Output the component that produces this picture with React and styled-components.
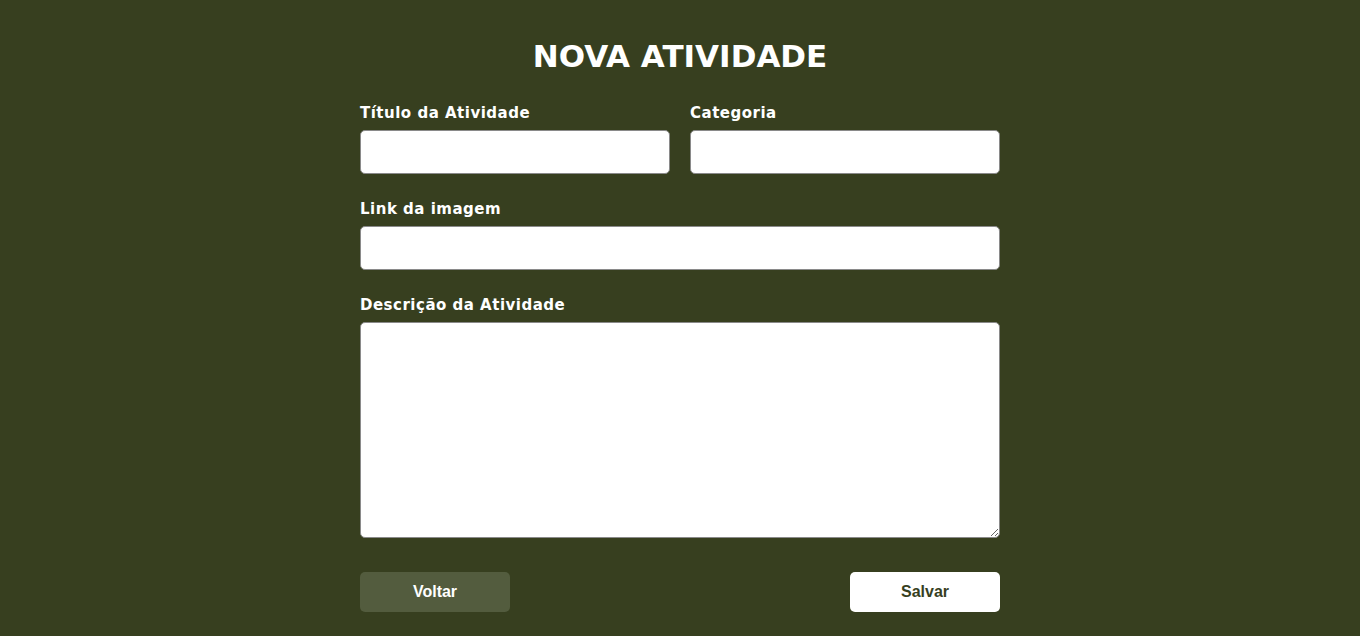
import styled, { createGlobalStyle } from "styled-components";

const GlobalStyle = createGlobalStyle`
  body {
    margin: 0;
    background: #373f1f;
    font-family: "DejaVu Sans", "Open Sans", sans-serif;
  }
`;

const NovaAtividade = () => {
  return (
    <Wrapper>
      <GlobalStyle />
      <h1>NOVA ATIVIDADE</h1>
      <Form>
        <Row>
          <Field>
            <Label>Título da Atividade</Label>
            <Input type="text" />
          </Field>
          <Field>
            <Label>Categoria</Label>
            <Input type="text" />
          </Field>
        </Row>
        <Field>
          <Label>Link da imagem</Label>
          <Input type="text" />
        </Field>
        <Field>
          <Label>Descrição da Atividade</Label>
          <TextArea />
        </Field>
        <Actions>
          <Button type="button">Voltar</Button>
          <Button type="submit" $primary>Salvar</Button>
        </Actions>
      </Form>
    </Wrapper>
  );
};

const Wrapper = styled.main`
  width: 640px;
  margin: 0 auto;
  padding-top: 37px;

  h1 {
    margin: 0 0 27px;
    text-align: center;
    color: #fff;
    font-size: 31px;
    line-height: 39px;
    font-weight: 700;
    letter-spacing: 0;
  }
`;

const Form = styled.form`
  display: flex;
  flex-direction: column;
  gap: 25px;
`;

const Row = styled.div`
  display: grid;
  grid-template-columns: 1fr 1fr;
  column-gap: 20px;
`;

const Field = styled.div`
  display: flex;
  flex-direction: column;
`;

const Label = styled.label`
  color: #fff;
  font-size: 15px;
  line-height: 20px;
  font-weight: 600;
  letter-spacing: 0.5px;
  margin-bottom: 7px;
`;

const Input = styled.input`
  box-sizing: border-box;
  height: 44px;
  width: 100%;
  border: 1px solid #8a8a8a;
  border-radius: 5px;
  background: #fff;
  padding: 0 12px;
  font-size: 15px;
`;

const TextArea = styled.textarea`
  box-sizing: border-box;
  height: 216px;
  width: 100%;
  border: 1px solid #8a8a8a;
  border-radius: 5px;
  background: #fff;
  padding: 10px 12px;
  font-size: 15px;
`;

const Actions = styled.div`
  display: flex;
  justify-content: space-between;
  margin-top: 9px;
`;

const Button = styled.button`
  width: 150px;
  height: 40px;
  border: none;
  border-radius: 5px;
  padding: 0;
  font-family: "Liberation Sans", Arial, sans-serif;
  font-weight: 700;
  font-size: 16px;
  cursor: pointer;
  background: ${(p) => (p.$primary ? "#fff" : "#535c3e")};
  color: ${(p) => (p.$primary ? "#373f1f" : "#fff")};
`;

export default NovaAtividade;
